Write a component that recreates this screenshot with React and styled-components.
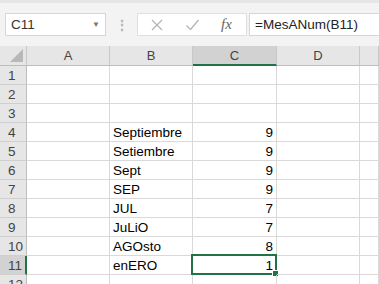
import React from 'react'
import styled, { createGlobalStyle } from 'styled-components'

const GlobalStyle = createGlobalStyle`
  body {
    margin: 0;
    background: #ffffff;
    font-family: "Liberation Sans", Arial, sans-serif;
  }
`

const Window = styled.div`
  width: 379px;
  height: 284px;
  overflow: hidden;
  background: #ffffff;
`

const Toolbar = styled.div`
  height: 46px;
  box-sizing: border-box;
  background: #f3f3f3;
  border-top: 3px solid #e6e6e6;
  display: flex;
  align-items: center;
  padding: 0 0 0 5px;
`

const NameBox = styled.div`
  width: 101px;
  height: 23px;
  box-sizing: border-box;
  background: #fff;
  border: 1px solid #d6d6d6;
  display: flex;
  align-items: center;
  justify-content: space-between;
  padding: 0 5px 0 5px;
  font-size: 13.5px;
  color: #333;
`

const Caret = styled.span`
  font-size: 8px;
  color: #777;
`

const Dots = styled.div`
  width: 31px;
  display: flex;
  justify-content: center;
  color: #b3b3b3;
  font-size: 14px;
  font-weight: bold;
  line-height: 1;
`

const IconBox = styled.div`
  width: 110px;
  height: 23px;
  box-sizing: border-box;
  background: #fff;
  border: 1px solid #e0e0e0;
  display: flex;
  align-items: center;
  padding-left: 12px;
  gap: 21px;
`

const Fx = styled.span`
  font-family: "Liberation Serif", serif;
  font-style: italic;
  font-size: 15px;
  color: #666;
  margin-left: 0;
`

const FormulaBox = styled.div`
  flex: 1;
  height: 23px;
  box-sizing: border-box;
  margin-left: 2px;
  background: #fff;
  border: 1px solid #d6d6d6;
  border-right: none;
  display: flex;
  align-items: center;
  padding-left: 5px;
  font-size: 13.5px;
  color: #222;
`

const Sheet = styled.div`
  display: grid;
  grid-template-columns: 27px 83px 83px 84px 83px 1fr;
  grid-auto-rows: 19px;
  grid-template-rows: 20px;
`

const ColHead = styled.div`
  background: ${p => (p.$active ? '#d2d2d2' : '#e6e6e6')};
  border-right: 1px solid #c8c8c8;
  border-bottom: ${p => (p.$active ? '2px solid #217346' : '1px solid #bdbdbd')};
  box-sizing: border-box;
  display: flex;
  align-items: center;
  justify-content: center;
  font-size: 13px;
  color: #444;
  position: relative;
`

const Corner = styled.div`
  width: 0;
  height: 0;
  border-left: 13px solid transparent;
  border-bottom: 13px solid #b8b8b8;
  position: absolute;
  right: 3px;
  bottom: 3px;
`

const RowHead = styled.div`
  background: ${p => (p.$active ? '#d2d2d2' : '#e6e6e6')};
  border-right: ${p => (p.$active ? '2px solid #217346' : '1px solid #bdbdbd')};
  border-bottom: 1px solid #cfcfcf;
  box-sizing: border-box;
  display: flex;
  align-items: center;
  padding-left: 8px;
  font-size: 13.5px;
  color: #444;
`

const Cell = styled.div`
  border-right: 1px solid #d9d9d9;
  border-bottom: 1px solid #d9d9d9;
  box-sizing: border-box;
  display: flex;
  align-items: flex-end;
  justify-content: ${p => (p.$num ? 'flex-end' : 'flex-start')};
  padding: 0 3px 1px 3px;
  font-size: 13.5px;
  color: #000;
  position: relative;
`

const Selection = styled.div`
  position: absolute;
  left: -2px;
  top: -2px;
  right: -1px;
  bottom: -1px;
  border: 2px solid #217346;
  pointer-events: none;
`

const Handle = styled.div`
  position: absolute;
  right: -4px;
  bottom: -4px;
  width: 5px;
  height: 5px;
  background: #217346;
  border: 1px solid #fff;
`

const rows = [
  ['', ''],
  ['', ''],
  ['', ''],
  ['Septiembre', 9],
  ['Setiembre', 9],
  ['Sept', 9],
  ['SEP', 9],
  ['JUL', 7],
  ['JuLiO', 7],
  ['AGOsto', 8],
  ['enERO', 1],
  ['', ''],
]

const Cross = () => (
  <svg width="14" height="14" viewBox="0 0 14 14">
    <path d="M2 2 L12 12 M12 2 L2 12" stroke="#b5b5b5" strokeWidth="1.3" fill="none" />
  </svg>
)

const Check = () => (
  <svg width="15" height="14" viewBox="0 0 15 14">
    <path d="M1.5 7.5 L5.5 11.5 L13.5 2" stroke="#b5b5b5" strokeWidth="1.3" fill="none" />
  </svg>
)

const App = () => (
  <Window>
    <GlobalStyle />
    <Toolbar>
      <NameBox>
        C11
        <Caret>▼</Caret>
      </NameBox>
      <Dots>⋮</Dots>
      <IconBox>
        <Cross />
        <Check />
        <Fx>fx</Fx>
      </IconBox>
      <FormulaBox>=MesANum(B11)</FormulaBox>
    </Toolbar>
    <Sheet>
      <ColHead><Corner /></ColHead>
      <ColHead>A</ColHead>
      <ColHead>B</ColHead>
      <ColHead $active>C</ColHead>
      <ColHead>D</ColHead>
      <ColHead />
      {rows.map(([name, num], i) => (
        <React.Fragment key={i}>
          <RowHead $active={i === 10}>{i + 1}</RowHead>
          <Cell />
          <Cell>{name}</Cell>
          <Cell $num>
            {num}
            {i === 10 && (
              <Selection>
                <Handle />
              </Selection>
            )}
          </Cell>
          <Cell />
          <Cell />
        </React.Fragment>
      ))}
    </Sheet>
  </Window>
)

export default App
